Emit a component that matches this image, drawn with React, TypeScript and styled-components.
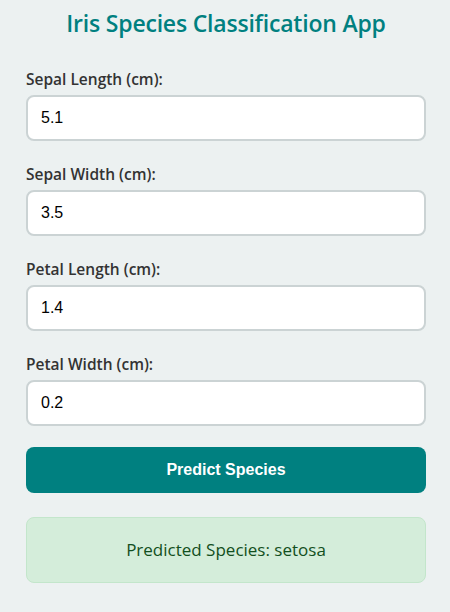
import React, { useState } from 'react'
import styled, { createGlobalStyle } from 'styled-components'

const GlobalStyle = createGlobalStyle`
  html, body {
    margin: 0;
    padding: 0;
    background: #ecf1f1;
  }
  * {
    box-sizing: border-box;
  }
`;

const Page = styled.div`
  padding: 7px 24px 20px 26px;
  font-family: "Open Sans", "Noto Sans", sans-serif;
`;

const Title = styled.h1`
  margin: 0 0 30px;
  text-align: center;
  color: #008080;
  font-size: 23px;
  font-weight: 600;
  line-height: 32px;
  letter-spacing: -0.2px;
`;

const Fields = styled.div`
  display: grid;
  gap: 23px;
`;

const Field = styled.div`
  display: flex;
  flex-direction: column;
`;

const Label = styled.label`
  font-size: 15.5px;
  font-weight: 600;
  line-height: 20px;
  color: #333;
  margin-bottom: 6px;
`;

const Input = styled.input`
  width: 100%;
  height: 46px;
  padding: 0 13px;
  border: 2px solid #cbd3d4;
  border-radius: 8px;
  background: #fff;
  font-family: "Liberation Sans", Arial, sans-serif;
  font-size: 16px;
  color: #000;
  outline: none;
`;

const PredictButton = styled.button`
  display: block;
  width: 100%;
  margin-top: 21px;
  padding: 14px 0;
  border: none;
  border-radius: 8px;
  background: #008080;
  color: #fff;
  font-family: "Liberation Sans", Arial, sans-serif;
  font-size: 16px;
  font-weight: 700;
  line-height: 18px;
  cursor: pointer;
`;

const Result = styled.div`
  margin-top: 24px;
  padding: 19px 0;
  border: 1px solid #c3e6cb;
  border-radius: 8px;
  background: #d4edda;
  color: #124f20;
  text-align: center;
  font-size: 17px;
  font-weight: 500;
  line-height: 26px;
`;

const fields = [
  { key: 'sl', label: 'Sepal Length (cm):', value: '5.1' },
  { key: 'sw', label: 'Sepal Width (cm):', value: '3.5' },
  { key: 'pl', label: 'Petal Length (cm):', value: '1.4' },
  { key: 'pw', label: 'Petal Width (cm):', value: '0.2' },
];

const App = () => {
  const [values, setValues] = useState<Record<string, string>>(
    Object.fromEntries(fields.map((f) => [f.key, f.value]))
  );

  return (
    <Page>
      <GlobalStyle />
      <Title>Iris Species Classification App</Title>
      <Fields>
        {fields.map((f) => (
          <Field key={f.key}>
            <Label htmlFor={f.key}>{f.label}</Label>
            <Input
              id={f.key}
              value={values[f.key]}
              onChange={(e) => setValues({ ...values, [f.key]: e.target.value })}
            />
          </Field>
        ))}
      </Fields>
      <PredictButton>Predict Species</PredictButton>
      <Result>Predicted Species: setosa</Result>
    </Page>
  );
}

export default App;
